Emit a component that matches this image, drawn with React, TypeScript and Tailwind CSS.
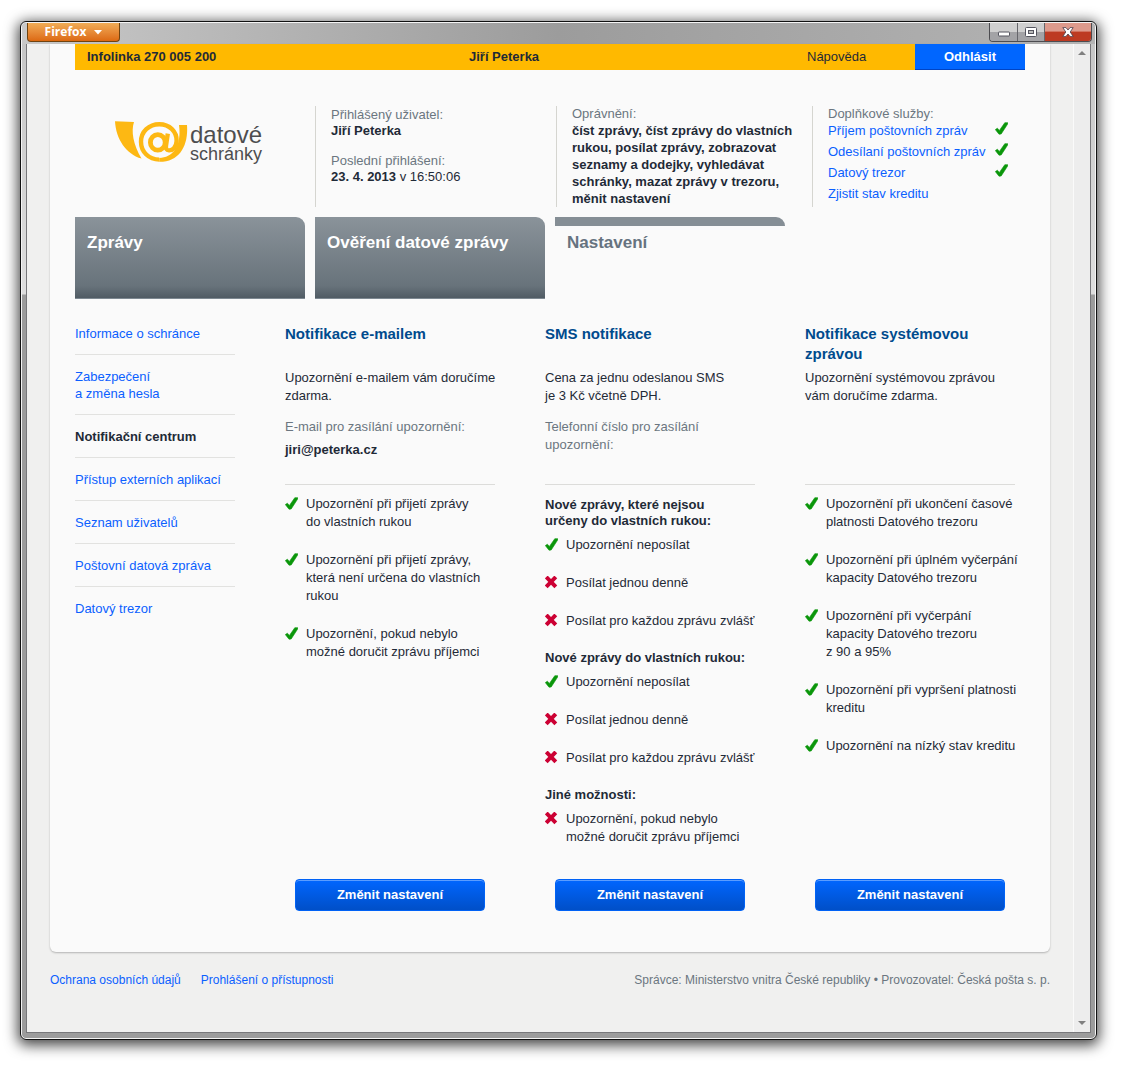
import type { ReactNode } from "react";

const tabs = [
  { id: "zpravy", label: "Zprávy", active: false },
  { id: "overeni", label: "Ověření datové zprávy", active: false },
  { id: "nastaveni", label: "Nastavení", active: true },
];

const services = [
  { label: "Příjem poštovních zpráv", enabled: true },
  { label: "Odesílaní poštovních zpráv", enabled: true },
  { label: "Datový trezor", enabled: true },
  { label: "Zjistit stav kreditu", enabled: false },
];

const navItems = [
  { label: "Informace o schránce", active: false },
  { label: "Zabezpečení\na změna hesla", active: false },
  { label: "Notifikační centrum", active: true },
  { label: "Přístup externích aplikací", active: false },
  { label: "Seznam uživatelů", active: false },
  { label: "Poštovní datová zpráva", active: false },
  { label: "Datový trezor", active: false },
];

type Option = { text: string; on: boolean };

const emailOptions: Option[] = [
  { text: "Upozornění při přijetí zprávy\ndo vlastních rukou", on: true },
  { text: "Upozornění při přijetí zprávy,\nkterá není určena do vlastních\nrukou", on: true },
  { text: "Upozornění, pokud nebylo\nmožné doručit zprávu příjemci", on: true },
];

const smsGroups: { title: string; options: Option[] }[] = [
  {
    title: "Nové zprávy, které nejsou\nurčeny do vlastních rukou:",
    options: [
      { text: "Upozornění neposílat", on: true },
      { text: "Posílat jednou denně", on: false },
      { text: "Posílat pro každou zprávu zvlášť", on: false },
    ],
  },
  {
    title: "Nové zprávy do vlastních rukou:",
    options: [
      { text: "Upozornění neposílat", on: true },
      { text: "Posílat jednou denně", on: false },
      { text: "Posílat pro každou zprávu zvlášť", on: false },
    ],
  },
  {
    title: "Jiné možnosti:",
    options: [{ text: "Upozornění, pokud nebylo\nmožné doručit zprávu příjemci", on: false }],
  },
];

const systemOptions: Option[] = [
  { text: "Upozornění při ukončení časové\nplatnosti Datového trezoru", on: true },
  { text: "Upozornění při úplném vyčerpání\nkapacity Datového trezoru", on: true },
  { text: "Upozornění při vyčerpání\nkapacity Datového trezoru\nz 90 a 95%", on: true },
  { text: "Upozornění při vypršení platnosti\nkreditu", on: true },
  { text: "Upozornění na nízký stav kreditu", on: true },
];

const CheckIcon = () => (
  <svg viewBox="0 0 13 13" className="h-[13px] w-[13px] shrink-0" aria-hidden="true">
    <path
      d="M0.3 7.6 L2.4 6.2 L4.4 8.4 L9.8 0.7 L12.8 0.7 L12.8 1.8 L6.2 12 L4 12.2 Z"
      fill="#0a960a"
      stroke="#0a960a"
      strokeWidth="0.6"
      strokeLinejoin="round"
    />
  </svg>
);

const CrossIcon = () => (
  <svg viewBox="0 0 13 13" className="h-[13px] w-[13px] shrink-0" aria-hidden="true">
    <path d="M2.6 2.4 L9.4 9.4 M9.4 2.4 L2.6 9.4" stroke="#cc0033" strokeWidth="4" strokeLinecap="square" />
  </svg>
);

const Logo = () => (
  <a href="#" className="flex items-start gap-[2px] text-[#4d4d4f]">
    <svg viewBox="0 0 73 42" className="h-[42px] w-[73px]" aria-hidden="true">
      <path d="M0 0.2 L19 1 C16 10 18 23 26.5 37.6 C11 33 1 18 0 0.2 Z" fill="#fdb813" />
      <path
        d="M64 4 L72 4 C73.5 24 65 41 44.3 40.8 L44.3 37 C60 36.5 66.5 22 64 4 Z"
        fill="#fdb813"
      />
      <path
        d="M44.3 38.6 C34 38.6 26 31 26 20.8 C26 10.6 34 3.2 44.3 3.2 C54.6 3.2 62 10.6 61.6 20 C61.2 26.6 57.4 29.6 54 29.4 C51.4 29.2 50.6 27.4 51 24.6 L52.8 12.6"
        fill="none"
        stroke="#fdb813"
        strokeWidth="4.4"
      />
      <ellipse cx="42.8" cy="21.4" rx="7.4" ry="7.8" fill="none" stroke="#fdb813" strokeWidth="4.8" />
    </svg>
    <span className="flex flex-col pt-[3px]">
      <span className="text-2xl leading-[22px]">datové</span>
      <span className="text-lg leading-[17px]">schránky</span>
    </span>
  </a>
);

const OptionList = ({ options }: { options: Option[] }) => (
  <ul className="flex flex-col gap-5">
    {options.map((option) => (
      <li key={option.text} className="flex gap-2 whitespace-pre leading-[18px]">
        <span className="pt-[2px]">{option.on ? <CheckIcon /> : <CrossIcon />}</span>
        <span>{option.text}</span>
      </li>
    ))}
  </ul>
);

const Column = ({ title, intro, children }: { title: string; intro: ReactNode; children: ReactNode }) => (
  <section className="flex min-w-0 flex-col">
    <h2 className="min-h-[45px] whitespace-pre-line text-[15px] font-bold leading-5 text-[#004b8d]">{title}</h2>
    <div className="min-h-[116px] whitespace-pre border-b border-[#dcdcda] leading-[18px]">{intro}</div>
    <div className="pb-[33px] pt-[10px]">{children}</div>
    <button
      type="button"
      className="mx-[10px] mt-auto h-8 rounded border border-[#0062f5] bg-linear-to-b from-[#0066ff] to-[#004fc8] font-bold text-white shadow-[inset_0_1px_0_#5a9dff]"
    >
      Změnit nastavení
    </button>
  </section>
);

const TitleBar = () => (
  <div className="flex h-[21px] items-start justify-between rounded-t bg-linear-to-r from-[#c9c9c9] via-[#9c9c9c] to-[#b4b4b4] pl-[5px] pr-[3px]">
    <button
      type="button"
      className="flex h-[19px] w-[93px] items-center justify-center gap-2 rounded-b border border-t-0 border-[#70430f] bg-linear-to-b from-[#f0ac55] to-[#dc690f] font-['Open_Sans',sans-serif] text-xs font-bold text-white"
    >
      Firefox
      <svg viewBox="0 0 8 5" className="h-[5px] w-2" aria-hidden="true">
        <path d="M0 0 H8 L4 4.5 Z" fill="#fff" />
      </svg>
    </button>
    <div className="flex h-[19px] overflow-hidden rounded-b border border-t-0 border-[#4c4c50]">
      <button
        type="button"
        aria-label="Minimalizovat"
        className="flex w-7 items-center justify-center border-r border-[#66666b] bg-linear-to-b from-[#cfcfcf] from-50% to-[#a3a3a6] to-50%"
      >
        <svg viewBox="0 0 12 6" className="mt-1 h-[6px] w-3" aria-hidden="true">
          <rect x="0.5" y="1" width="11" height="4" rx="0.5" fill="#fff" stroke="#55555f" />
        </svg>
      </button>
      <button
        type="button"
        aria-label="Maximalizovat"
        className="flex w-[27px] items-center justify-center border-r border-[#66666b] bg-linear-to-b from-[#cfcfcf] from-50% to-[#a3a3a6] to-50%"
      >
        <svg viewBox="0 0 12 10" className="h-[10px] w-3" aria-hidden="true">
          <rect x="0.5" y="0.5" width="11" height="9" rx="1" fill="#fff" stroke="#55555f" />
          <rect x="3.5" y="3.5" width="5" height="3" fill="#bbb" stroke="#55555f" />
        </svg>
      </button>
      <button
        type="button"
        aria-label="Zavřít"
        className="flex w-[46px] items-center justify-center bg-linear-to-b from-[#dd9a8c] from-45% to-[#bd3a22] to-50%"
      >
        <svg viewBox="0 0 12 10" className="h-[10px] w-3" aria-hidden="true">
          <path
            d="M0.8 0.6 H4 L6 3 L8 0.6 H11.2 L8.2 5 L11.2 9.4 H8 L6 7 L4 9.4 H0.8 L3.8 5 Z"
            fill="#fff"
            stroke="#5a4a55"
            strokeWidth="0.9"
          />
        </svg>
      </button>
    </div>
  </div>
);

const Scrollbar = () => (
  <div className="flex w-[17px] shrink-0 flex-col justify-between border-l border-[#fafafa] bg-[#ededed]">
    <button type="button" aria-label="Posunout nahoru" className="flex h-[18px] items-center justify-center">
      <svg viewBox="0 0 8 4" className="h-1 w-2" aria-hidden="true">
        <path d="M0 4 H8 L4 0 Z" fill="#808080" />
      </svg>
    </button>
    <button type="button" aria-label="Posunout dolů" className="flex h-[18px] items-center justify-center">
      <svg viewBox="0 0 8 4" className="h-1 w-2" aria-hidden="true">
        <path d="M0 0 H8 L4 4 Z" fill="#808080" />
      </svg>
    </button>
  </div>
);

const UserInfo = () => (
  <header className="grid min-h-[100px] grid-cols-[240px_241px_256px_1fr] leading-4">
    <div className="pl-10 pt-[15px]">
      <Logo />
    </div>
    <div className="border-l border-[#d5d5d0] pl-[15px] pt-px">
      <p className="text-[#6b7680]">Přihlášený uživatel:</p>
      <p className="font-bold">Jiří Peterka</p>
      <p className="mt-[14px] text-[#6b7680]">Poslední přihlášení:</p>
      <p>
        <b>23. 4. 2013</b> v 16:50:06
      </p>
    </div>
    <div className="border-l border-[#d5d5d0] pl-[15px]">
      <p className="text-[#6b7680]">Oprávnění:</p>
      <p className="whitespace-pre font-bold leading-[17px]">
        {"číst zprávy, číst zprávy do vlastních\nrukou, posílat zprávy, zobrazovat\nseznamy a dodejky, vyhledávat\nschránky, mazat zprávy v trezoru,\nměnit nastavení"}
      </p>
    </div>
    <div className="border-l border-[#d5d5d0] pl-[15px]">
      <p className="text-[#6b7680]">Doplňkové služby:</p>
      <ul className="flex flex-col gap-1 leading-[17px]">
        {services.map((service) => (
          <li key={service.label} className="flex items-start justify-between pr-[17px]">
            <a href="#" className="whitespace-nowrap text-[#0b5fff]">
              {service.label}
            </a>
            {service.enabled && <CheckIcon />}
          </li>
        ))}
      </ul>
    </div>
  </header>
);

const Tabs = () => (
  <nav className="mt-[10px] flex gap-[10px]">
    {tabs.map((tab) => (
      <a
        key={tab.id}
        href={`#${tab.id}`}
        className={`h-[82px] w-[230px] overflow-hidden rounded-tr-[9px] text-[17px] font-bold leading-5 ${
          tab.active
            ? "border-t-[9px] border-[#858e95] pl-3 pt-[7px] text-[#66737f]"
            : "border-b border-[#7d8891] bg-linear-to-b from-[#8a939a] via-[#68737b] via-85% to-[#505b64] pl-3 pt-4 text-white"
        }`}
      >
        {tab.label}
      </a>
    ))}
  </nav>
);

const SideNav = () => (
  <nav>
    <ul className="pt-px">
      {navItems.map((item, index) => (
        <li
          key={item.label}
          className={`whitespace-pre-line pb-3 leading-[17px] ${index > 0 ? "border-t border-[#e2e2e0] pt-[13px]" : ""}`}
        >
          <a href="#" className={item.active ? "font-bold" : "text-[#0b5fff]"}>
            {item.label}
          </a>
        </li>
      ))}
    </ul>
  </nav>
);

const App = () => {
  return (
    <div className="bg-white pb-[27px] pl-5 pr-7 pt-[21px] font-['Liberation_Sans',Arial,sans-serif] text-[13px] text-[#1f2a37]">
      <div className="rounded-md border border-[#111] bg-[linear-gradient(to_bottom,#c4c4c4,#dedede_272px,#9c9c9c_273px)] shadow-[0_3px_14px_2px_rgba(0,0,0,0.75),inset_0_0_0_1px_#f4f4f4]">
        <div className="px-px pt-px">
          <TitleBar />
        </div>
        <div className="mx-[5px] flex border-x border-b border-[#77777a]">
          <div className="min-w-0 flex-1 bg-[#f0f0ef] px-[23px]">
            <main className="rounded-b-md bg-[#fafafa] px-[25px] pb-[41px] shadow-[0_1px_2px_rgba(0,0,0,0.25)]">
              <div className="grid h-[26px] grid-cols-[394px_338px_1fr_110px] items-center bg-[#ffb900]">
                <span className="pl-3 font-bold">Infolinka 270 005 200</span>
                <span className="font-bold">Jiří Peterka</span>
                <a href="#">Nápověda</a>
                <button type="button" className="h-full border-b border-[#0044c4] bg-[#0066ff] font-bold text-white">
                  Odhlásit
                </button>
              </div>
              <div className="pt-9">
                <UserInfo />
                <Tabs />
              </div>
              <div className="grid grid-cols-[160px_1fr_1fr_1fr] gap-x-[50px] pr-[10px] pt-[25px]">
                <SideNav />
                <Column
                  title="Notifikace e-mailem"
                  intro={
                    <>
                      <p>{"Upozornění e-mailem vám doručíme\nzdarma."}</p>
                      <p className="mt-[13px] text-[#6b7680]">E-mail pro zasílání upozornění:</p>
                      <p className="mt-[5px] font-bold">jiri@peterka.cz</p>
                    </>
                  }
                >
                  <OptionList options={emailOptions} />
                </Column>
                <Column
                  title="SMS notifikace"
                  intro={
                    <>
                      <p>{"Cena za jednu odeslanou SMS\nje 3 Kč včetně DPH."}</p>
                      <p className="mt-[13px] text-[#6b7680]">{"Telefonní číslo pro zasílání\nupozornění:"}</p>
                    </>
                  }
                >
                  <div className="flex flex-col gap-5 pt-[2px]">
                    {smsGroups.map((group) => (
                      <div key={group.title}>
                        <h3 className="mb-[7px] whitespace-pre-line font-bold leading-4">{group.title}</h3>
                        <OptionList options={group.options} />
                      </div>
                    ))}
                  </div>
                </Column>
                <Column
                  title={"Notifikace systémovou\nzprávou"}
                  intro={<p>{"Upozornění systémovou zprávou\nvám doručíme zdarma."}</p>}
                >
                  <OptionList options={systemOptions} />
                </Column>
              </div>
            </main>
            <footer className="flex justify-between pb-[43px] pt-[19px] text-xs leading-[18px]">
              <div className="flex gap-5 text-[#0b5fff]">
                <a href="#">Ochrana osobních údajů</a>
                <a href="#">Prohlášení o přístupnosti</a>
              </div>
              <p className="text-[#6b7680]">
                Správce: Ministerstvo vnitra České republiky • Provozovatel: Česká pošta s. p.
              </p>
            </footer>
          </div>
          <Scrollbar />
        </div>
        <div className="h-[6px]" />
      </div>
    </div>
  );
};

export default App;
